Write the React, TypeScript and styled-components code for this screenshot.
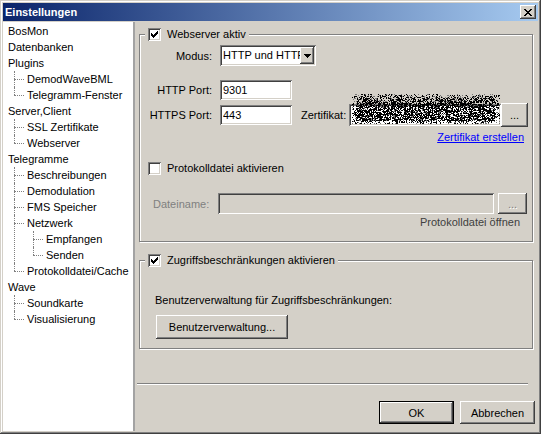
import { useMemo } from 'react';
import styled, { createGlobalStyle, css } from 'styled-components';

const GlobalStyle = createGlobalStyle`
  html, body {
    margin: 0;
    padding: 0;
    background: #d4d0c8;
  }
  body {
    font-family: 'Liberation Sans', Arial, sans-serif;
    font-size: 11px;
    color: #000;
  }
  * {
    box-sizing: border-box;
  }
`;

// classic 3d edges
const raised = css`
  background: #d4d0c8;
  box-shadow: inset -1px -1px #404040, inset 1px 1px #fff, inset -2px -2px #808080,
    inset 2px 2px #d4d0c8;
`;

const sunken = css`
  box-shadow: inset 1px 1px #808080, inset -1px -1px #fff, inset 2px 2px #404040,
    inset -2px -2px #d4d0c8;
`;

const Window = styled.div`
  width: 541px;
  height: 434px;
  padding: 3px;
  display: flex;
  flex-direction: column;
  background: #d4d0c8;
  box-shadow: inset -1px -1px #404040, inset 1px 1px #d4d0c8, inset -2px -2px #808080,
    inset 2px 2px #fff;
`;

const TitleBar = styled.div`
  height: 18px;
  display: flex;
  align-items: center;
  justify-content: space-between;
  padding: 0 2px 0 2px;
  background: linear-gradient(90deg, #0a246a, #a6caf0);
  color: #fff;
  font-weight: bold;
  font-size: 11px;
`;

const CloseButton = styled.button`
  ${raised};
  width: 16px;
  height: 14px;
  border: 0;
  padding: 0;
  display: flex;
  align-items: center;
  justify-content: center;
`;

const Body = styled.div`
  flex: 1;
  display: flex;
  margin-top: 1px;
  min-height: 0;
`;

const TreePane = styled.div`
  width: 132px;
  flex-shrink: 0;
  background: #fff;
  border-right: 2px solid #a3a3a3;
  padding-top: 1px;
  overflow: hidden;
`;

const Branch = styled.ul`
  margin: 0;
  padding: 0;
  list-style: none;
`;

const lineX = (depth: number) => depth * 19 - 8;

const TreeItem = styled.li<{ $depth: number }>`
  position: relative;
  ${(p) =>
    p.$depth > 0 &&
    css`
      &::before {
        content: '';
        position: absolute;
        left: ${lineX(p.$depth)}px;
        top: 0;
        bottom: 0;
        border-left: 1px dotted #808080;
      }
      &:last-child::before {
        bottom: auto;
        height: 8px;
      }
    `}
`;

const NodeLabel = styled.div<{ $depth: number }>`
  position: relative;
  height: 16px;
  line-height: 16px;
  white-space: nowrap;
  padding-left: ${(p) => 5 + p.$depth * 19}px;
  ${(p) =>
    p.$depth > 0 &&
    css`
      &::before {
        content: '';
        position: absolute;
        left: ${lineX(p.$depth)}px;
        top: 8px;
        width: 10px;
        border-top: 1px dotted #808080;
      }
    `}
`;

const Main = styled.main`
  flex: 1;
  display: flex;
  flex-direction: column;
  padding: 12px 5px 0 4px;
`;

const GroupBox = styled.div<{ $pad: string; $mt?: number }>`
  position: relative;
  border: 1px solid #808080;
  box-shadow: inset 1px 1px #fff, 1px 1px #fff;
  padding: ${(p) => p.$pad};
  margin-top: ${(p) => p.$mt ?? 0}px;
`;

const Legend = styled.div`
  position: absolute;
  top: -7px;
  left: 5px;
  height: 13px;
  padding: 0 3px;
  display: flex;
  align-items: center;
  gap: 6px;
  background: #d4d0c8;
  line-height: 13px;
`;

const CheckRow = styled.div<{ $mt?: number; $ml?: number }>`
  display: flex;
  align-items: center;
  gap: 6px;
  height: 13px;
  line-height: 13px;
  margin-top: ${(p) => p.$mt ?? 0}px;
  margin-left: ${(p) => p.$ml ?? 0}px;
`;

const CheckBox = styled.span`
  ${sunken};
  background: #fff;
  width: 13px;
  height: 13px;
  flex-shrink: 0;
  display: flex;
  align-items: center;
  justify-content: center;
`;

const FormRow = styled.div<{ $mt?: number; $h: number; $justify?: string }>`
  display: flex;
  align-items: center;
  justify-content: ${(p) => p.$justify ?? 'flex-start'};
  height: ${(p) => p.$h}px;
  margin-top: ${(p) => p.$mt ?? 0}px;
`;

const FieldLabel = styled.span<{ $w: number; $ml?: number; $right?: boolean; $disabled?: boolean }>`
  width: ${(p) => p.$w}px;
  flex-shrink: 0;
  margin-left: ${(p) => p.$ml ?? 0}px;
  text-align: ${(p) => (p.$right ? 'right' : 'left')};
  padding-right: ${(p) => (p.$right ? 8 : 0)}px;
  color: ${(p) => (p.$disabled ? '#808080' : '#000')};
  white-space: nowrap;
`;

const TextBox = styled.input<{ $w: number; $h: number; $disabled?: boolean }>`
  ${sunken};
  width: ${(p) => p.$w}px;
  height: ${(p) => p.$h}px;
  flex-shrink: 0;
  border: 0;
  outline: 0;
  padding: 0 0 0 3px;
  margin: 0;
  font: inherit;
  color: #000;
  background: ${(p) => (p.$disabled ? '#d4d0c8' : '#fff')};
`;

const CertField = styled.div`
  position: relative;
  display: flex;
  align-items: center;
  margin-left: 0;
`;

const NoiseLayer = styled.svg`
  position: absolute;
  left: 3px;
  top: -9px;
  pointer-events: none;
`;

const Combo = styled.div`
  ${sunken};
  background: #fff;
  width: 96px;
  height: 21px;
  padding: 2px;
  display: flex;
  align-items: center;
`;

const ComboText = styled.span`
  flex: 1;
  overflow: hidden;
  white-space: nowrap;
  padding-left: 1px;
  line-height: 17px;
`;

const ComboArrow = styled.span`
  ${raised};
  width: 14px;
  height: 17px;
  flex-shrink: 0;
  display: flex;
  align-items: center;
  justify-content: center;
`;

const Button = styled.button<{ $w: number; $h: number; $default?: boolean; $disabled?: boolean; $ml?: number }>`
  ${raised};
  width: ${(p) => p.$w}px;
  height: ${(p) => p.$h}px;
  flex-shrink: 0;
  margin: 0 0 0 ${(p) => p.$ml ?? 0}px;
  padding: 0;
  font: inherit;
  color: ${(p) => (p.$disabled ? '#808080' : '#000')};
  border: ${(p) => (p.$default ? '1px solid #000' : '0')};
  text-shadow: ${(p) => (p.$disabled ? '1px 1px #fff' : 'none')};
`;

const Link = styled.a`
  color: #0000ff;
  text-decoration: underline;
  line-height: 13px;
  margin-right: 8px;
`;

const MutedAction = styled.span`
  color: #404040;
  line-height: 13px;
  margin-right: 12px;
`;

const Caption = styled.div`
  line-height: 13px;
`;

const Separator = styled.div`
  height: 2px;
  margin: 34px 5px 0 -2px;
  border-top: 1px solid #808080;
  border-bottom: 1px solid #fff;
`;

const Footer = styled.div`
  display: flex;
  justify-content: flex-end;
  gap: 6px;
  margin: 16px -2px 0 0;
`;

const Bitmap = ({ rows, color = '#000' }: { rows: string[]; color?: string }) => {
  const d = rows
    .map((r, y) =>
      [...r].map((c, x) => (c === 'X' ? `M${x} ${y}h1v1h-1z` : '')).join('')
    )
    .join('');
  return (
    <svg width={rows[0].length} height={rows.length} shapeRendering="crispEdges">
      <path d={d} fill={color} />
    </svg>
  );
};

const CHECK = ['......X', '.....XX', 'X...XXX', 'XX.XXX.', 'XXXXX..', '.XXX...', '..X....'];
const CROSS = ['XX....XX', '.XX..XX.', '..XXXX..', '...XX...', '..XXXX..', '.XX..XX.', 'XX....XX'];
const ARROW = ['XXXXXXX', '.XXXXX.', '..XXX..', '...X...'];

const Check = ({ checked }: { checked?: boolean }) => (
  <CheckBox>{checked && <Bitmap rows={CHECK} />}</CheckBox>
);

// scrambled certificate name
const Noise = ({ w, h }: { w: number; h: number }) => {
  const [dark, mid] = useMemo(() => {
    let s = 91813;
    const rnd = () => {
      s |= 0;
      s = (s + 0x6d2b79f5) | 0;
      let t = Math.imul(s ^ (s >>> 15), 1 | s);
      t = (t + Math.imul(t ^ (t >>> 7), 61 | t)) ^ t;
      return ((t ^ (t >>> 14)) >>> 0) / 4294967296;
    };
    let a = '';
    let b = '';
    for (let y = 0; y < h; y++) {
      const rowD = y < 8 ? 0.15 + y * 0.06 : y > h - 4 ? 0.3 : 0.62;
      for (let x = 0; x < w; x++) {
        const edge = x < 4 || x > w - 6 ? 0.5 : 1;
        const r = rnd();
        if (r < rowD * edge) a += `M${x} ${y}h1v1h-1z`;
        else if (r < rowD * edge + 0.12) b += `M${x} ${y}h1v1h-1z`;
      }
    }
    return [a, b];
  }, [w, h]);
  return (
    <NoiseLayer width={w} height={h} shapeRendering="crispEdges">
      <path d={mid} fill="#777" />
      <path d={dark} fill="#000" />
    </NoiseLayer>
  );
};

type Node = { label: string; children?: Node[] };

const settingsTree: Node[] = [
  { label: 'BosMon' },
  { label: 'Datenbanken' },
  { label: 'Plugins', children: [{ label: 'DemodWaveBML' }, { label: 'Telegramm-Fenster' }] },
  { label: 'Server,Client', children: [{ label: 'SSL Zertifikate' }, { label: 'Webserver' }] },
  {
    label: 'Telegramme',
    children: [
      { label: 'Beschreibungen' },
      { label: 'Demodulation' },
      { label: 'FMS Speicher' },
      { label: 'Netzwerk', children: [{ label: 'Empfangen' }, { label: 'Senden' }] },
      { label: 'Protokolldatei/Cache' },
    ],
  },
  { label: 'Wave', children: [{ label: 'Soundkarte' }, { label: 'Visualisierung' }] },
];

const TreeBranch = ({ nodes, depth }: { nodes: Node[]; depth: number }) => (
  <Branch>
    {nodes.map((n) => (
      <TreeItem key={n.label} $depth={depth}>
        <NodeLabel $depth={depth}>{n.label}</NodeLabel>
        {n.children && <TreeBranch nodes={n.children} depth={depth + 1} />}
      </TreeItem>
    ))}
  </Branch>
);

export default function App() {
  return (
    <>
      <GlobalStyle />
      <Window>
        <TitleBar>
          <span>Einstellungen</span>
          <CloseButton>
            <Bitmap rows={CROSS} />
          </CloseButton>
        </TitleBar>
        <Body>
          <TreePane>
            <TreeBranch nodes={settingsTree} depth={0} />
          </TreePane>
          <Main>
            <GroupBox $pad="10px 0 12px 0">
              <Legend>
                <Check checked />
                <span>Webserver aktiv</span>
              </Legend>
              <FormRow $h={21}>
                <FieldLabel $w={80} $right>
                  Modus:
                </FieldLabel>
                <Combo>
                  <ComboText>HTTP und HTTPS</ComboText>
                  <ComboArrow>
                    <Bitmap rows={ARROW} />
                  </ComboArrow>
                </Combo>
              </FormRow>
              <FormRow $h={20} $mt={14}>
                <FieldLabel $w={80} $right>
                  HTTP Port:
                </FieldLabel>
                <TextBox $w={72} $h={20} value="9301" readOnly />
              </FormRow>
              <FormRow $h={24} $mt={3}>
                <FieldLabel $w={80} $right>
                  HTTPS Port:
                </FieldLabel>
                <TextBox $w={72} $h={20} value="443" readOnly />
                <FieldLabel $w={48} $ml={9}>
                  Zertifikat:
                </FieldLabel>
                <CertField>
                  <TextBox $w={152} $h={22} value="" readOnly />
                  <Noise w={148} h={30} />
                  <Button $w={27} $h={24}>
                    ...
                  </Button>
                </CertField>
              </FormRow>
              <FormRow $h={13} $mt={4} $justify="flex-end">
                <Link href="#">Zertifikat erstellen</Link>
              </FormRow>
              <CheckRow $mt={18} $ml={8}>
                <Check />
                <span>Protokolldatei aktivieren</span>
              </CheckRow>
              <FormRow $h={21} $mt={18}>
                <FieldLabel $w={65} $ml={13} $disabled>
                  Dateiname:
                </FieldLabel>
                <TextBox $w={276} $h={21} $disabled value="" readOnly />
                <Button $w={29} $h={21} $ml={4} $disabled>
                  ...
                </Button>
              </FormRow>
              <FormRow $h={13} $mt={2} $justify="flex-end">
                <MutedAction>Protokolldatei öffnen</MutedAction>
              </FormRow>
            </GroupBox>

            <GroupBox $pad="33px 0 9px 15px" $mt={18}>
              <Legend>
                <Check checked />
                <span>Zugriffsbeschränkungen aktivieren</span>
              </Legend>
              <Caption>Benutzerverwaltung für Zugriffsbeschränkungen:</Caption>
              <FormRow $h={24} $mt={8}>
                <Button $w={132} $h={24} $ml={1}>
                  Benutzerverwaltung...
                </Button>
              </FormRow>
            </GroupBox>

            <Separator />
            <Footer>
              <Button $w={75} $h={23} $default>
                OK
              </Button>
              <Button $w={75} $h={23}>
                Abbrechen
              </Button>
            </Footer>
          </Main>
        </Body>
      </Window>
    </>
  );
}
